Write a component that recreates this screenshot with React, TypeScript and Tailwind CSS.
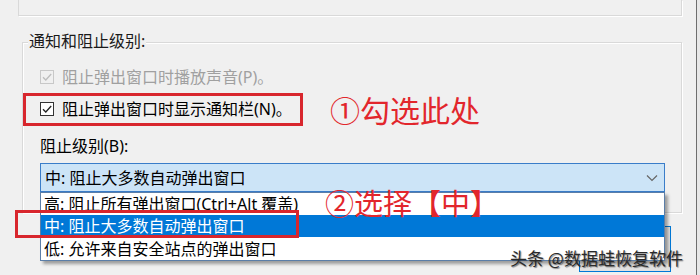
import React from "react";

const FONT = '"Noto Sans", "Noto Sans CJK SC", sans-serif';
const CJK = '"Noto Sans CJK SC", sans-serif';

function Check({ disabled }: { disabled?: boolean }) {
  return (
    <div
      className={`w-[14px] h-[14px] border flex items-center justify-center shrink-0 ${
        disabled ? "border-[#c8c8c8] bg-[#f0f0f0]" : "border-[#333333] bg-white"
      }`}
    >
      <svg width="12" height="12" viewBox="0 0 12 12">
        <path
          d="M2 6.2 L4.8 9 L10.2 3"
          fill="none"
          stroke={disabled ? "#bdbdbd" : "#222222"}
          strokeWidth="1.3"
        />
      </svg>
    </div>
  );
}

export default function App() {
  return (
    <div
      className="relative w-[700px] h-[275px] bg-[#f0f0f0] overflow-hidden flex text-[16px] leading-none text-black"
      style={{ fontFamily: FONT }}
    >
      <div className="w-[697px] flex flex-col border-r border-[#6e6e6e]">
        <div className="ml-[18px] w-[664px] h-[16px] border-x border-b border-[#d9d9d9] shadow-[1px_1px_0_#ffffff]" />
        <div className="relative mt-[26px] ml-[22px] w-[660px] h-[171px] border border-[#d9d9d9] shadow-[inset_1px_1px_0_#ffffff,1px_1px_0_#ffffff] pl-[17px] pt-[22px] flex flex-col">
          <div className="absolute left-[5px] -top-[10px] px-[1px] bg-[#f0f0f0] text-[#1a1a1a]">
            通知和阻止级别:
          </div>
          <div className="h-[24px] flex items-center gap-[8px] text-[#a0a0a0]">
            <Check disabled />
            <span>阻止弹出窗口时播放声音(P)。</span>
          </div>
          <div className="mt-[8px] h-[24px] flex items-center gap-[8px]">
            <Check />
            <span>阻止弹出窗口时显示通知栏(N)。</span>
          </div>
          <div className="mt-[13px] h-[24px] flex items-center">阻止级别(B):</div>
          <div className="mt-[5px] w-[625px] h-[29px] border border-[#3a7dc9] bg-[#cce4f7] flex items-center pl-[4px] pr-[6px]">
            <span className="flex-1">中: 阻止大多数自动弹出窗口</span>
            <svg width="12" height="8" viewBox="0 0 12 8">
              <path d="M1 1.5 L6 6.5 L11 1.5" fill="none" stroke="#666666" strokeWidth="1.2" />
            </svg>
          </div>
        </div>
        <div className="mt-[13px] flex justify-end pr-[25px]">
          <div className="w-[92px] h-[46px] border border-[#0078d7] bg-[#e1e1e1]" />
        </div>
      </div>
      <div className="flex-1 bg-[#e8e8e8]" />

      {/* dropdown list */}
      <div className="absolute left-[40px] top-[192px] w-[625px] border border-[#5b7ea8] bg-white shadow-[3px_3px_3px_rgba(0,0,0,0.35)] flex flex-col">
        <div className="h-[22px] flex items-center pl-[3px]">高: 阻止所有弹出窗口(Ctrl+Alt 覆盖)</div>
        <div className="h-[22px] flex items-center pl-[3px] bg-[#0078d7] text-white">中: 阻止大多数自动弹出窗口</div>
        <div className="h-[23px] flex items-center pl-[3px]">低: 允许来自安全站点的弹出窗口</div>
      </div>

      {/* red annotation boxes */}
      <div className="absolute left-[23px] top-[93px] w-[280px] h-[33px] border-[3px] border-[#d8262d]" />
      <div className="absolute left-[15px] top-[210px] w-[284px] h-[28px] border-[3px] border-[#d8262d]" />

      <div
        className="absolute left-[330px] top-[92px] text-[30px] leading-[34px] text-[#e2262c]"
        style={{ fontFamily: CJK }}
      >
        ①勾选此处
      </div>
      <div
        className="absolute left-[325px] top-[185px] text-[29px] leading-[34px] text-[#e2262c]"
        style={{ fontFamily: CJK }}
      >
        ②选择【中】
      </div>

      <div
        className="absolute left-[510px] top-[247px] text-[17px] leading-[22px] text-[#2a2a2a] [text-shadow:1px_1px_1px_rgba(0,0,0,0.45)]"
        style={{ fontFamily: CJK }}
      >
        头条 @数据蛙恢复软件
      </div>
    </div>
  );
}
